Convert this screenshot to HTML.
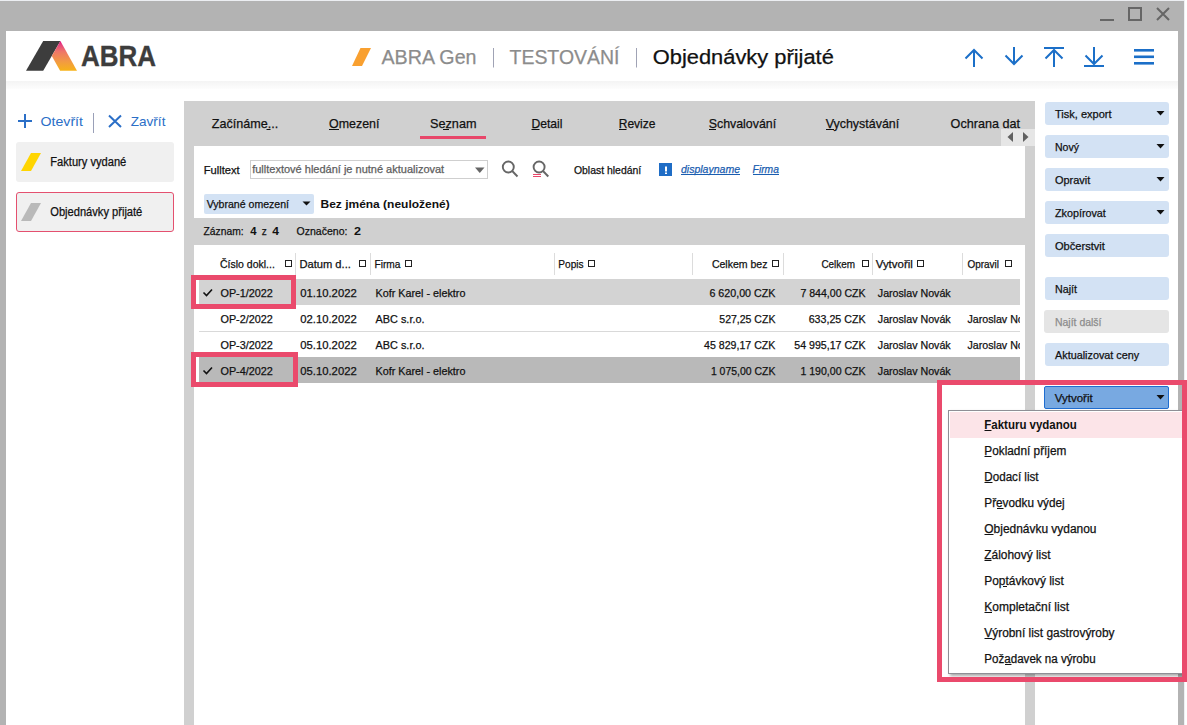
<!DOCTYPE html>
<html><head><meta charset="utf-8"><title>ABRA Gen - Objednávky přijaté</title>
<style>
html,body{margin:0;padding:0;}
body{width:1187px;height:725px;overflow:hidden;position:relative;font-family:"Liberation Sans", sans-serif;background:#fff;}
svg text{font-family:"Liberation Sans", sans-serif;} svg text.n{stroke-width:0.25px;}
</style></head><body>
<div style="position:absolute;left:0px;top:0px;width:1185px;height:1px;background:#eceef2;"></div><div style="position:absolute;left:1184px;top:0px;width:1px;height:725px;background:#eef0f3;"></div><div style="position:absolute;left:0px;top:1px;width:1184px;height:724px;background:#b3b3b3;"></div><div style="position:absolute;left:6px;top:31px;width:1172px;height:694px;background:#ffffff;"></div><div style="position:absolute;left:6px;top:81px;width:1172px;height:8px;background:linear-gradient(#f4f4f4,#fdfdfd);"></div><div style="position:absolute;left:16px;top:142px;width:158px;height:40px;background:#f0f0f0;border-radius:3px;"></div><div style="position:absolute;left:16px;top:192px;width:158px;height:40px;background:#f0f0f0;border-radius:3px;box-sizing:border-box;border:1px solid #e4506f;"></div><div style="position:absolute;left:93px;top:113px;width:1px;height:20px;background:#9aa0b8;"></div><div style="position:absolute;left:184px;top:101px;width:851px;height:624px;background:#d0d0d0;"></div><div style="position:absolute;left:194px;top:146px;width:831px;height:579px;background:#ffffff;"></div><div style="position:absolute;left:420px;top:136px;width:66px;height:3px;background:#e8476a;"></div><div style="position:absolute;left:1001px;top:129px;width:34px;height:17px;background:#e6e6e6;"></div><div style="position:absolute;left:194px;top:218px;width:831px;height:27px;background:#d0d0d0;"></div><div style="position:absolute;left:250px;top:160px;width:238px;height:19px;background:#ffffff;box-sizing:border-box;border:1px solid #cfcfcf;"></div><div style="position:absolute;left:204px;top:194px;width:110px;height:20px;background:#d3e2f4;border-radius:2px;"></div><div style="position:absolute;left:659px;top:163px;width:13px;height:13px;background:#1f6dc6;"></div><div style="position:absolute;left:199px;top:279px;width:821px;height:26px;background:#d3d3d3;"></div><div style="position:absolute;left:199px;top:331px;width:821px;height:1px;background:#d9d9d9;"></div><div style="position:absolute;left:199px;top:357px;width:821px;height:26px;background:#b9b9b9;"></div><div style="position:absolute;left:295px;top:253px;width:1px;height:22px;background:#dcdcdc;"></div><div style="position:absolute;left:370px;top:253px;width:1px;height:22px;background:#dcdcdc;"></div><div style="position:absolute;left:554px;top:253px;width:1px;height:22px;background:#dcdcdc;"></div><div style="position:absolute;left:692px;top:253px;width:1px;height:22px;background:#dcdcdc;"></div><div style="position:absolute;left:783px;top:253px;width:1px;height:22px;background:#dcdcdc;"></div><div style="position:absolute;left:872px;top:253px;width:1px;height:22px;background:#dcdcdc;"></div><div style="position:absolute;left:962px;top:253px;width:1px;height:22px;background:#dcdcdc;"></div><div style="position:absolute;left:285px;top:260px;width:7px;height:7px;background:transparent;box-sizing:border-box;border:1px solid #222;"></div><div style="position:absolute;left:359px;top:260px;width:7px;height:7px;background:transparent;box-sizing:border-box;border:1px solid #222;"></div><div style="position:absolute;left:405px;top:260px;width:7px;height:7px;background:transparent;box-sizing:border-box;border:1px solid #222;"></div><div style="position:absolute;left:588px;top:260px;width:7px;height:7px;background:transparent;box-sizing:border-box;border:1px solid #222;"></div><div style="position:absolute;left:772px;top:260px;width:7px;height:7px;background:transparent;box-sizing:border-box;border:1px solid #222;"></div><div style="position:absolute;left:862px;top:260px;width:7px;height:7px;background:transparent;box-sizing:border-box;border:1px solid #222;"></div><div style="position:absolute;left:917px;top:260px;width:7px;height:7px;background:transparent;box-sizing:border-box;border:1px solid #222;"></div><div style="position:absolute;left:1005px;top:260px;width:7px;height:7px;background:transparent;box-sizing:border-box;border:1px solid #222;"></div><div style="position:absolute;left:191px;top:275px;width:105px;height:34px;background:transparent;box-sizing:border-box;border:5px solid #ea4a6c;"></div><div style="position:absolute;left:191px;top:352px;width:107px;height:35px;background:transparent;box-sizing:border-box;border:5px solid #ea4a6c;"></div><div style="position:absolute;left:1045px;top:102px;width:124px;height:23px;background:#d3e2f4;border-radius:3px;"></div><div style="position:absolute;left:1045px;top:135px;width:124px;height:23px;background:#d3e2f4;border-radius:3px;"></div><div style="position:absolute;left:1045px;top:168px;width:124px;height:23px;background:#d3e2f4;border-radius:3px;"></div><div style="position:absolute;left:1045px;top:201px;width:124px;height:23px;background:#d3e2f4;border-radius:3px;"></div><div style="position:absolute;left:1045px;top:234px;width:124px;height:23px;background:#d3e2f4;border-radius:3px;"></div><div style="position:absolute;left:1045px;top:277px;width:124px;height:23px;background:#d3e2f4;border-radius:3px;"></div><div style="position:absolute;left:1044px;top:310px;width:125px;height:23px;background:#e5e5e5;border-radius:3px;"></div><div style="position:absolute;left:1045px;top:343px;width:124px;height:23px;background:#d3e2f4;border-radius:3px;"></div><div style="position:absolute;left:1044px;top:386px;width:125px;height:23px;background:#78a9e1;border-radius:2px;box-sizing:border-box;border:1px solid #1f6dd0;"></div><div style="position:absolute;left:948px;top:410px;width:236px;height:264px;background:#ffffff;box-sizing:border-box;border:1px solid #8f8f96;box-shadow:2px 2px 3px rgba(0,0,0,0.35);"></div><div style="position:absolute;left:950px;top:412px;width:232px;height:26px;background:#fce4e8;"></div><div style="position:absolute;left:937px;top:380px;width:250px;height:302px;background:transparent;box-sizing:border-box;border:5px solid #ea4a6c;"></div>
<svg width="1187" height="725" viewBox="0 0 1187 725" style="position:absolute;left:0;top:0;">

<defs>
 <linearGradient id="lg" x1="0" y1="0" x2="0" y2="1">
  <stop offset="0" stop-color="#e5007e"/><stop offset="0.12" stop-color="#e6417f"/><stop offset="0.35" stop-color="#ee7569"/><stop offset="0.7" stop-color="#f29b42"/><stop offset="1" stop-color="#f7b318"/>
 </linearGradient>
 <clipPath id="clipOp"><rect x="960" y="300" width="60" height="60"/></clipPath>
</defs>
<!-- logo -->
<polygon points="26,70.8 43.2,41 60.4,41 43.2,70.8" fill="#3d3d3d"/>
<polygon points="60.4,41 77,70.8 60.1,70.8 51.8,55.9" fill="url(#lg)"/>
<!-- orange slash -->
<polygon points="352,66 360.5,48 371,48 362,66" fill="#f9a030"/>
<!-- separators -->
<rect x="493" y="48" width="1" height="19.5" fill="#a0a3b5"/>
<rect x="636" y="48" width="1" height="19.5" fill="#a0a3b5"/>
<!-- window controls -->
<rect x="1100" y="19" width="14" height="2" fill="#666"/>
<rect x="1129" y="8" width="12" height="12" fill="none" stroke="#666" stroke-width="2"/>
<path d="M1157,8 L1169,20 M1169,8 L1157,20" stroke="#666" stroke-width="2" fill="none"/>
<!-- nav icons -->
<g stroke="#1b6fc8" stroke-width="2" fill="none">
 <path d="M974,67 V50 M965.5,58.5 L974,50 L982.5,58.5"/>
 <path d="M1014,47 V64 M1005.5,55.5 L1014,64 L1022.5,55.5"/>
 <path d="M1044,48 H1064 M1054,67 V50 M1045.5,58.5 L1054,50 L1062.5,58.5"/>
 <path d="M1094,47 V64 M1085.5,55.5 L1094,64 L1102.5,55.5 M1084,66 H1104"/>
</g>
<g fill="#1b6fc8">
 <rect x="1134" y="49" width="20" height="2.6"/>
 <rect x="1134" y="55.5" width="20" height="2.6"/>
 <rect x="1134" y="62" width="20" height="2.6"/>
</g>
<!-- left panel icons -->
<path d="M18,121 H32 M25,114 V128" stroke="#2b6fc7" stroke-width="2" fill="none"/>
<path d="M109,115.5 L121,127 M121,115.5 L109,127" stroke="#2b6fc7" stroke-width="2" fill="none"/>
<polygon points="21,171 31,153 41,153 31,171" fill="#ffd500"/>
<polygon points="21,221 31,203 41,203 31,221" fill="#b9b9b9"/>
<!-- tab arrows -->
<polygon points="1007.5,137 1013,132 1013,142" fill="#606060"/>
<polygon points="1028.5,137 1023,132 1023,142" fill="#606060"/>
<!-- input dropdown arrow -->
<polygon points="475,167.5 484.5,167.5 479.75,173" fill="#666"/>
<!-- search icons -->
<g stroke="#666" stroke-width="1.9" fill="none">
 <circle cx="508.3" cy="167" r="5.5"/>
 <path d="M512.2,171 L517.5,176.5"/>
 <circle cx="539.1" cy="167" r="5.5"/>
 <path d="M543,171 L548.3,176.5"/>
</g>
<rect x="533" y="174" width="8" height="1" fill="#e8476a"/><rect x="533" y="176" width="8" height="1" fill="#e8476a"/>
<!-- vybrane arrow -->
<polygon points="302.5,201.5 310.5,201.5 306.5,205.5" fill="#111"/>
<!-- info icon ! -->
<rect x="665" y="166.5" width="2" height="5" fill="#fff"/>
<rect x="665" y="172.5" width="2" height="1.5" fill="#fff"/>
<!-- checkmarks -->
<path d="M203.5,292.5 L206.5,295.5 L212,289.5" stroke="#111" stroke-width="1.6" fill="none"/>
<path d="M203.5,370.5 L206.5,373.5 L212,367.5" stroke="#111" stroke-width="1.6" fill="none"/>
<!-- sidebar arrows -->
<polygon points="1156.5,111 1164.5,111 1160.5,115.5" fill="#111"/>
<polygon points="1156.5,144 1164.5,144 1160.5,148.5" fill="#111"/>
<polygon points="1156.5,177 1164.5,177 1160.5,181.5" fill="#111"/>
<polygon points="1156.5,210 1164.5,210 1160.5,214.5" fill="#111"/>
<polygon points="1156.5,395 1164.5,395 1160.5,399.5" fill="#111"/>
<rect x="266.5" y="129" width="4" height="1" fill="#111"/>
<rect x="329" y="129" width="10" height="1" fill="#111"/>
<rect x="443" y="129" width="6" height="1" fill="#111"/>
<rect x="531.5" y="129" width="8" height="1" fill="#111"/>
<rect x="619" y="129" width="7.5" height="1" fill="#111"/>
<rect x="709" y="129" width="7" height="1" fill="#111"/>
<rect x="826" y="129" width="8" height="1" fill="#111"/>
<rect x="681" y="174" width="59" height="1" fill="#1a5db0"/>
<rect x="753" y="174" width="26" height="1" fill="#1a5db0"/>
<rect x="984.5" y="430" width="7" height="1" fill="#111"/>
<rect x="984.5" y="456" width="7" height="1" fill="#111"/>
<rect x="984.5" y="482" width="8" height="1" fill="#111"/>
<rect x="997" y="508" width="6.5" height="1" fill="#111"/>
<rect x="984.5" y="534" width="9" height="1" fill="#111"/>
<rect x="984.5" y="560" width="7" height="1" fill="#111"/>
<rect x="1003" y="586" width="4" height="1" fill="#111"/>
<rect x="984.5" y="612" width="7.5" height="1" fill="#111"/>
<rect x="984.5" y="638" width="8" height="1" fill="#111"/>
<rect x="1005" y="664" width="6.5" height="1" fill="#111"/>

<text x="81" y="66.3" textLength="75" lengthAdjust="spacingAndGlyphs" font-size="30" fill="#3d3d3d" font-weight="bold" stroke="#3d3d3d" stroke-width="0.35" stroke-linejoin="round">ABRA</text><text x="381.5" y="63.8" textLength="95" lengthAdjust="spacingAndGlyphs" font-size="20.5" fill="#8c8c8c" stroke="#8c8c8c" class="n">ABRA Gen</text><text x="509.5" y="63.8" textLength="110" lengthAdjust="spacingAndGlyphs" font-size="20.5" fill="#8c8c8c" stroke="#8c8c8c" class="n">TESTOVÁNÍ</text><text x="652.8" y="63.8" textLength="181" lengthAdjust="spacingAndGlyphs" font-size="20.5" fill="#111111" stroke="#111111" class="n">Objednávky přijaté</text><text x="40.5" y="126.2" textLength="42.5" lengthAdjust="spacingAndGlyphs" font-size="13" fill="#2b6fc7">Otevřít</text><text x="130.8" y="126.2" textLength="34.6" lengthAdjust="spacingAndGlyphs" font-size="13" fill="#2b6fc7">Zavřít</text><text x="50.3" y="166.2" textLength="76" lengthAdjust="spacingAndGlyphs" font-size="12" fill="#111" stroke="#111" class="n">Faktury vydané</text><text x="50.3" y="216" textLength="92" lengthAdjust="spacingAndGlyphs" font-size="12" fill="#111" stroke="#111" class="n">Objednávky přijaté</text><text x="211.8" y="128" textLength="66.4" lengthAdjust="spacingAndGlyphs" font-size="13" fill="#111" stroke="#111" class="n">Začínáme...</text><text x="329" y="128" textLength="50.4" lengthAdjust="spacingAndGlyphs" font-size="13" fill="#111" stroke="#111" class="n">Omezení</text><text x="430" y="128" textLength="46.5" lengthAdjust="spacingAndGlyphs" font-size="13" fill="#111" stroke="#111" class="n">Seznam</text><text x="531.4" y="128" textLength="31.1" lengthAdjust="spacingAndGlyphs" font-size="13" fill="#111" stroke="#111" class="n">Detail</text><text x="618.7" y="128" textLength="36.8" lengthAdjust="spacingAndGlyphs" font-size="13" fill="#111" stroke="#111" class="n">Revize</text><text x="708.7" y="128" textLength="67.5" lengthAdjust="spacingAndGlyphs" font-size="13" fill="#111" stroke="#111" class="n">Schvalování</text><text x="825.7" y="128" textLength="73.5" lengthAdjust="spacingAndGlyphs" font-size="13" fill="#111" stroke="#111" class="n">Vychystávání</text><text x="950.6" y="128" textLength="69.4" lengthAdjust="spacingAndGlyphs" font-size="13" fill="#111" stroke="#111" class="n">Ochrana dat</text><text x="203.7" y="173.6" textLength="36" lengthAdjust="spacingAndGlyphs" font-size="11" fill="#111" stroke="#111" class="n">Fulltext</text><text x="252.2" y="173.2" textLength="192" lengthAdjust="spacingAndGlyphs" font-size="11" fill="#5e5e5e" stroke="#5e5e5e" class="n">fulltextové hledání je nutné aktualizovat</text><text x="573.9" y="173.8" textLength="67.3" lengthAdjust="spacingAndGlyphs" font-size="11" fill="#111" stroke="#111" class="n">Oblast hledání</text><text x="681" y="172.6" textLength="59" lengthAdjust="spacingAndGlyphs" font-size="11" fill="#1a5db0" font-style="italic" stroke="#1a5db0" class="n">displayname</text><text x="752.6" y="172.6" textLength="26.3" lengthAdjust="spacingAndGlyphs" font-size="11" fill="#1a5db0" font-style="italic" stroke="#1a5db0" class="n">Firma</text><text x="206.7" y="207.7" textLength="82.3" lengthAdjust="spacingAndGlyphs" font-size="11" fill="#111" stroke="#111" class="n">Vybrané omezení</text><text x="320.5" y="207.7" textLength="129.2" lengthAdjust="spacingAndGlyphs" font-size="11" fill="#111" font-weight="bold">Bez jména (neuložené)</text><text x="203.6" y="234.8" textLength="40" lengthAdjust="spacingAndGlyphs" font-size="11" fill="#111" stroke="#111" class="n">Záznam:</text><text x="250.3" y="234.8" textLength="6.3" lengthAdjust="spacingAndGlyphs" font-size="11" fill="#111" font-weight="bold">4</text><text x="261.7" y="234.8" textLength="5" lengthAdjust="spacingAndGlyphs" font-size="11" fill="#111" stroke="#111" class="n">z</text><text x="272.2" y="234.8" textLength="6.7" lengthAdjust="spacingAndGlyphs" font-size="11" fill="#111" font-weight="bold">4</text><text x="296.6" y="234.8" textLength="50.8" lengthAdjust="spacingAndGlyphs" font-size="11" fill="#111" stroke="#111" class="n">Označeno:</text><text x="354" y="234.8" textLength="7" lengthAdjust="spacingAndGlyphs" font-size="11" fill="#111" font-weight="bold">2</text><text x="220" y="267.5" textLength="54.8" lengthAdjust="spacingAndGlyphs" font-size="11" fill="#111" stroke="#111" class="n">Číslo dokl...</text><text x="299.4" y="267.5" textLength="51.5" lengthAdjust="spacingAndGlyphs" font-size="11" fill="#111" stroke="#111" class="n">Datum d...</text><text x="374.5" y="267.5" textLength="25.9" lengthAdjust="spacingAndGlyphs" font-size="11" fill="#111" stroke="#111" class="n">Firma</text><text x="558.3" y="267.5" textLength="25.3" lengthAdjust="spacingAndGlyphs" font-size="11" fill="#111" stroke="#111" class="n">Popis</text><text x="711.9" y="267.5" textLength="55.6" lengthAdjust="spacingAndGlyphs" font-size="11" fill="#111" stroke="#111" class="n">Celkem bez</text><text x="821.4" y="267.5" textLength="33.6" lengthAdjust="spacingAndGlyphs" font-size="11" fill="#111" stroke="#111" class="n">Celkem</text><text x="875.7" y="267.5" textLength="37.1" lengthAdjust="spacingAndGlyphs" font-size="11" fill="#111" stroke="#111" class="n">Vytvořil</text><text x="967.5" y="267.5" textLength="31.5" lengthAdjust="spacingAndGlyphs" font-size="11" fill="#111" stroke="#111" class="n">Opravil</text><text x="220.5" y="296.5" textLength="52.3" lengthAdjust="spacingAndGlyphs" font-size="11" fill="#111" stroke="#111" class="n">OP-1/2022</text><text x="300.3" y="296.5" textLength="56.4" lengthAdjust="spacingAndGlyphs" font-size="11" fill="#111" stroke="#111" class="n">01.10.2022</text><text x="375.6" y="296.5" textLength="89.8" lengthAdjust="spacingAndGlyphs" font-size="11" fill="#111" stroke="#111" class="n">Kofr Karel - elektro</text><text x="709.4" y="296.5" textLength="66.0" lengthAdjust="spacingAndGlyphs" font-size="11" fill="#111" stroke="#111" class="n">6 620,00 CZK</text><text x="800.4" y="296.5" textLength="65.20000000000005" lengthAdjust="spacingAndGlyphs" font-size="11" fill="#111" stroke="#111" class="n">7 844,00 CZK</text><text x="877.8" y="296.5" textLength="72.9" lengthAdjust="spacingAndGlyphs" font-size="11" fill="#111" stroke="#111" class="n">Jaroslav Novák</text><text x="220.5" y="322.5" textLength="52.3" lengthAdjust="spacingAndGlyphs" font-size="11" fill="#111" stroke="#111" class="n">OP-2/2022</text><text x="300.3" y="322.5" textLength="56.4" lengthAdjust="spacingAndGlyphs" font-size="11" fill="#111" stroke="#111" class="n">02.10.2022</text><text x="375.6" y="322.5" textLength="48.9" lengthAdjust="spacingAndGlyphs" font-size="11" fill="#111" stroke="#111" class="n">ABC s.r.o.</text><text x="719.3" y="322.5" textLength="56.10000000000002" lengthAdjust="spacingAndGlyphs" font-size="11" fill="#111" stroke="#111" class="n">527,25 CZK</text><text x="808.7" y="322.5" textLength="56.89999999999998" lengthAdjust="spacingAndGlyphs" font-size="11" fill="#111" stroke="#111" class="n">633,25 CZK</text><text x="877.8" y="322.5" textLength="72.9" lengthAdjust="spacingAndGlyphs" font-size="11" fill="#111" stroke="#111" class="n">Jaroslav Novák</text><text x="967.5" y="322.5" textLength="72.9" lengthAdjust="spacingAndGlyphs" font-size="11" fill="#111" clip-path="url(#clipOp)" stroke="#111" class="n">Jaroslav Novák</text><text x="220.5" y="348.5" textLength="52.3" lengthAdjust="spacingAndGlyphs" font-size="11" fill="#111" stroke="#111" class="n">OP-3/2022</text><text x="300.3" y="348.5" textLength="56.4" lengthAdjust="spacingAndGlyphs" font-size="11" fill="#111" stroke="#111" class="n">05.10.2022</text><text x="375.6" y="348.5" textLength="48.9" lengthAdjust="spacingAndGlyphs" font-size="11" fill="#111" stroke="#111" class="n">ABC s.r.o.</text><text x="704.1" y="348.5" textLength="71.29999999999995" lengthAdjust="spacingAndGlyphs" font-size="11" fill="#111" stroke="#111" class="n">45 829,17 CZK</text><text x="794.3" y="348.5" textLength="71.30000000000007" lengthAdjust="spacingAndGlyphs" font-size="11" fill="#111" stroke="#111" class="n">54 995,17 CZK</text><text x="877.8" y="348.5" textLength="72.9" lengthAdjust="spacingAndGlyphs" font-size="11" fill="#111" stroke="#111" class="n">Jaroslav Novák</text><text x="967.5" y="348.5" textLength="72.9" lengthAdjust="spacingAndGlyphs" font-size="11" fill="#111" clip-path="url(#clipOp)" stroke="#111" class="n">Jaroslav Novák</text><text x="220.5" y="374.5" textLength="52.3" lengthAdjust="spacingAndGlyphs" font-size="11" fill="#111" stroke="#111" class="n">OP-4/2022</text><text x="300.3" y="374.5" textLength="56.4" lengthAdjust="spacingAndGlyphs" font-size="11" fill="#111" stroke="#111" class="n">05.10.2022</text><text x="375.6" y="374.5" textLength="89.8" lengthAdjust="spacingAndGlyphs" font-size="11" fill="#111" stroke="#111" class="n">Kofr Karel - elektro</text><text x="710.9" y="374.5" textLength="64.5" lengthAdjust="spacingAndGlyphs" font-size="11" fill="#111" stroke="#111" class="n">1 075,00 CZK</text><text x="800.4" y="374.5" textLength="65.20000000000005" lengthAdjust="spacingAndGlyphs" font-size="11" fill="#111" stroke="#111" class="n">1 190,00 CZK</text><text x="877.8" y="374.5" textLength="72.9" lengthAdjust="spacingAndGlyphs" font-size="11" fill="#111" stroke="#111" class="n">Jaroslav Novák</text><text x="1055" y="117.5" textLength="56.5" lengthAdjust="spacingAndGlyphs" font-size="11" fill="#111" stroke="#111" class="n">Tisk, export</text><text x="1055" y="150.5" textLength="24" lengthAdjust="spacingAndGlyphs" font-size="11" fill="#111" stroke="#111" class="n">Nový</text><text x="1055" y="183.5" textLength="35.3" lengthAdjust="spacingAndGlyphs" font-size="11" fill="#111" stroke="#111" class="n">Opravit</text><text x="1055" y="216.5" textLength="50.8" lengthAdjust="spacingAndGlyphs" font-size="11" fill="#111" stroke="#111" class="n">Zkopírovat</text><text x="1055" y="249.5" textLength="49.8" lengthAdjust="spacingAndGlyphs" font-size="11" fill="#111" stroke="#111" class="n">Občerstvit</text><text x="1055" y="292.5" textLength="22" lengthAdjust="spacingAndGlyphs" font-size="11" fill="#111" stroke="#111" class="n">Najít</text><text x="1055" y="325.5" textLength="46.5" lengthAdjust="spacingAndGlyphs" font-size="11" fill="#8c8c8c" stroke="#8c8c8c" class="n">Najít další</text><text x="1055" y="358.5" textLength="84.2" lengthAdjust="spacingAndGlyphs" font-size="11" fill="#111" stroke="#111" class="n">Aktualizovat ceny</text><text x="1054.8" y="402" textLength="37.9" lengthAdjust="spacingAndGlyphs" font-size="11" fill="#111" stroke="#111" class="n">Vytvořit</text><text x="984.3" y="428.8" textLength="92.5" lengthAdjust="spacingAndGlyphs" font-size="12" fill="#111" font-weight="bold">Fakturu vydanou</text><text x="984.3" y="454.8" textLength="82.1" lengthAdjust="spacingAndGlyphs" font-size="12" fill="#111" stroke="#111" class="n">Pokladní příjem</text><text x="984.3" y="480.8" textLength="54.3" lengthAdjust="spacingAndGlyphs" font-size="12" fill="#111" stroke="#111" class="n">Dodací list</text><text x="984.3" y="506.8" textLength="80.3" lengthAdjust="spacingAndGlyphs" font-size="12" fill="#111" stroke="#111" class="n">Převodku výdej</text><text x="984.3" y="532.8" textLength="112.2" lengthAdjust="spacingAndGlyphs" font-size="12" fill="#111" stroke="#111" class="n">Objednávku vydanou</text><text x="984.3" y="558.8" textLength="66.2" lengthAdjust="spacingAndGlyphs" font-size="12" fill="#111" stroke="#111" class="n">Zálohový list</text><text x="984.3" y="584.8" textLength="79.5" lengthAdjust="spacingAndGlyphs" font-size="12" fill="#111" stroke="#111" class="n">Poptávkový list</text><text x="984.3" y="610.8" textLength="84.7" lengthAdjust="spacingAndGlyphs" font-size="12" fill="#111" stroke="#111" class="n">Kompletační list</text><text x="984.3" y="636.8" textLength="130.2" lengthAdjust="spacingAndGlyphs" font-size="12" fill="#111" stroke="#111" class="n">Výrobní list gastrovýroby</text><text x="984.3" y="662.8" textLength="111.4" lengthAdjust="spacingAndGlyphs" font-size="12" fill="#111" stroke="#111" class="n">Požadavek na výrobu</text>
</svg>
</body></html>
